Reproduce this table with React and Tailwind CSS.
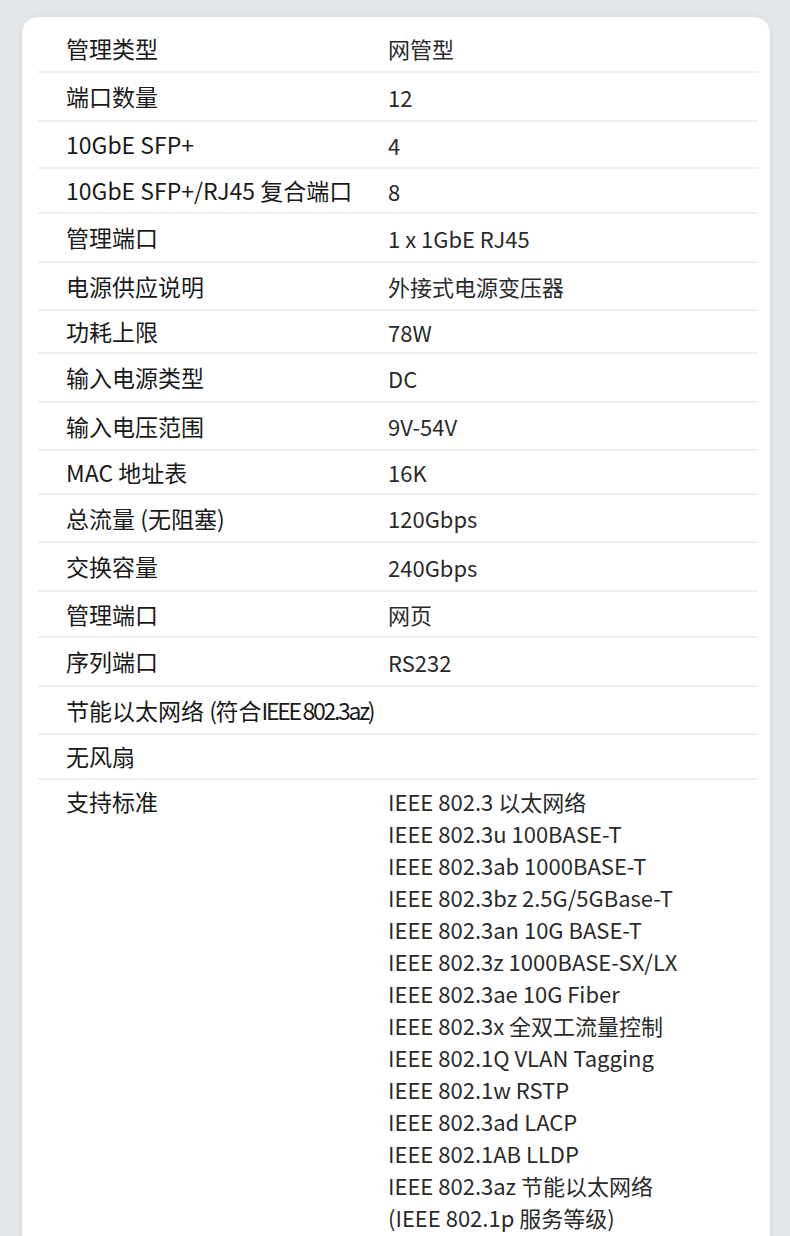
import React from "react";

const rows = [
  { label: "管理类型", value: "网管型", h: "h-[48px]" },
  { label: "端口数量", value: "12", h: "h-[49px]" },
  { label: "10GbE SFP+", value: "4", h: "h-[47px]" },
  { label: "10GbE SFP+/RJ45 复合端口", value: "8", h: "h-[45px]" },
  { label: "管理端口", value: "1 x 1GbE RJ45", h: "h-[49px]" },
  { label: "电源供应说明", value: "外接式电源变压器", h: "h-[48px]" },
  { label: "功耗上限", value: "78W", h: "h-[43px]" },
  { label: "输入电源类型", value: "DC", h: "h-[49px]" },
  { label: "输入电压范围", value: "9V-54V", h: "h-[48px]" },
  { label: "MAC 地址表", value: "16K", h: "h-[44px]" },
  { label: "总流量 (无阻塞)", value: "120Gbps", h: "h-[48px]" },
  { label: "交换容量", value: "240Gbps", h: "h-[49px]" },
  { label: "管理端口", value: "网页", h: "h-[46px]" },
  { label: "序列端口", value: "RS232", h: "h-[49px]" },
  {
    label: (
      <span>
        节能以太网络 <span className="tracking-[-0.06em]">(</span>符合<span className="tracking-[-0.1em]">IEEE 802.3az)</span>
      </span>
    ),
    value: "",
    h: "h-[48px]",
  },
  { label: "无风扇", value: "", h: "h-[45px]" },
];

const standards = [
  "IEEE 802.3 以太网络",
  "IEEE 802.3u 100BASE-T",
  "IEEE 802.3ab 1000BASE-T",
  "IEEE 802.3bz 2.5G/5GBase-T",
  "IEEE 802.3an 10G BASE-T",
  "IEEE 802.3z 1000BASE-SX/LX",
  "IEEE 802.3ae 10G Fiber",
  "IEEE 802.3x 全双工流量控制",
  "IEEE 802.1Q VLAN Tagging",
  "IEEE 802.1w RSTP",
  "IEEE 802.3ad LACP",
  "IEEE 802.1AB LLDP",
  "IEEE 802.3az 节能以太网络",
  "(IEEE 802.1p 服务等级)",
];

export default function App() {
  return (
    <div
      className="min-h-screen bg-[#e2e6e9] pt-[17px] pl-[22px] overflow-hidden"
      style={{ fontFamily: '"Noto Sans CJK SC", "Noto Sans", sans-serif' }}
    >
      <div className="w-[748px] bg-white rounded-[16px] shadow-[0_0_6px_rgba(0,0,0,0.06)] pl-[16px] pr-[12px] pt-[8px] pb-[40px] text-[22px]">
        {rows.map((r, i) => (
          <div
            key={i}
            className={`flex items-center border-b-2 border-[#eeeeee] pl-[28px] ${r.h}`}
          >
            <div className="w-[322px] shrink-0 text-[23px] text-[#1a1a1a] leading-none">{r.label}</div>
            <div className="leading-none text-[#2a2a2a]">{r.value}</div>
          </div>
        ))}
        <div className="flex pl-[28px] pt-[5px]">
          <div className="w-[322px] shrink-0 text-[23px] text-[#1a1a1a] leading-[32px]">支持标准</div>
          <div className="flex flex-col leading-[32px] text-[#2a2a2a]">
            {standards.map((s, i) => (
              <div key={i}>{s}</div>
            ))}
          </div>
        </div>
      </div>
    </div>
  );
}
